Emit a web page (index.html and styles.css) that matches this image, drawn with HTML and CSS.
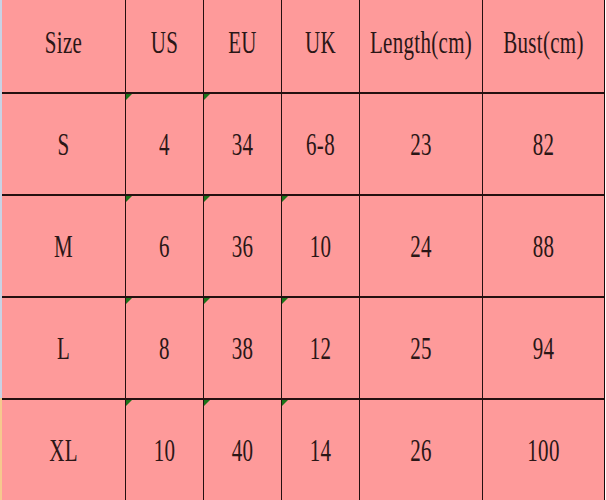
FILE: index.html
```html
<!DOCTYPE html>
<html>
<head>
<meta charset="utf-8">
<link rel="stylesheet" href="styles.css">
</head>
<body>
<div class="sheet">
  <div class="strip">
    <div class="strip-top"></div>
    <div class="strip-bottom"></div>
  </div>
  <div class="grid">
    <div class="cell head"><span>Size</span></div>
    <div class="cell head"><span>US</span></div>
    <div class="cell head"><span>EU</span></div>
    <div class="cell head"><span>UK</span></div>
    <div class="cell head"><span>Length(cm)</span></div>
    <div class="cell head"><span>Bust(cm)</span></div>

    <div class="cell"><span>S</span></div>
    <div class="cell mark"><span>4</span></div>
    <div class="cell mark"><span>34</span></div>
    <div class="cell"><span>6-8</span></div>
    <div class="cell"><span>23</span></div>
    <div class="cell"><span>82</span></div>

    <div class="cell"><span>M</span></div>
    <div class="cell mark"><span>6</span></div>
    <div class="cell mark"><span>36</span></div>
    <div class="cell mark"><span>10</span></div>
    <div class="cell"><span>24</span></div>
    <div class="cell"><span>88</span></div>

    <div class="cell"><span>L</span></div>
    <div class="cell mark"><span>8</span></div>
    <div class="cell mark"><span>38</span></div>
    <div class="cell mark"><span>12</span></div>
    <div class="cell"><span>25</span></div>
    <div class="cell"><span>94</span></div>

    <div class="cell"><span>XL</span></div>
    <div class="cell mark"><span>10</span></div>
    <div class="cell mark"><span>40</span></div>
    <div class="cell mark"><span>14</span></div>
    <div class="cell"><span>26</span></div>
    <div class="cell"><span>100</span></div>
  </div>
</div>
</body>
</html>
```

FILE: styles.css
```css
html, body {
  margin: 0;
  padding: 0;
  background: #ffffff;
}

.sheet {
  display: flex;
  width: 606px;
  height: 500px;
  overflow: hidden;
}

.strip {
  width: 2px;
  display: flex;
  flex-direction: column;
  flex: none;
}

.strip-top {
  height: 398px;
  background: #c9d2e4;
}

.strip-bottom {
  flex: 1;
  background: #f6c98e;
}

.grid {
  display: grid;
  grid-template-columns: 123px 77px 77px 77px 122px 121px;
  grid-template-rows: 92px 100px 100px 100px 100px;
  column-gap: 1px;
  row-gap: 2px;
  background: #241010;
  border-right: 1px solid #1a0a0a;
  height: 502px;
  align-content: start;
}

.cell {
  position: relative;
  background: #fe9a9a;
  display: flex;
  align-items: center;
  justify-content: center;
  font-family: "Liberation Serif", serif;
  font-size: 21px;
  color: #2a1616;
}

.head {
  padding-bottom: 8px;
  box-sizing: border-box;
}

.cell span {
  display: inline-block;
  letter-spacing: 0.3px;
  transform: scaleY(1.55);
}

.mark::before {
  content: "";
  position: absolute;
  left: 0;
  top: 0;
  width: 0;
  height: 0;
  border-top: 6px solid #1a741a;
  border-right: 6px solid transparent;
}
```
